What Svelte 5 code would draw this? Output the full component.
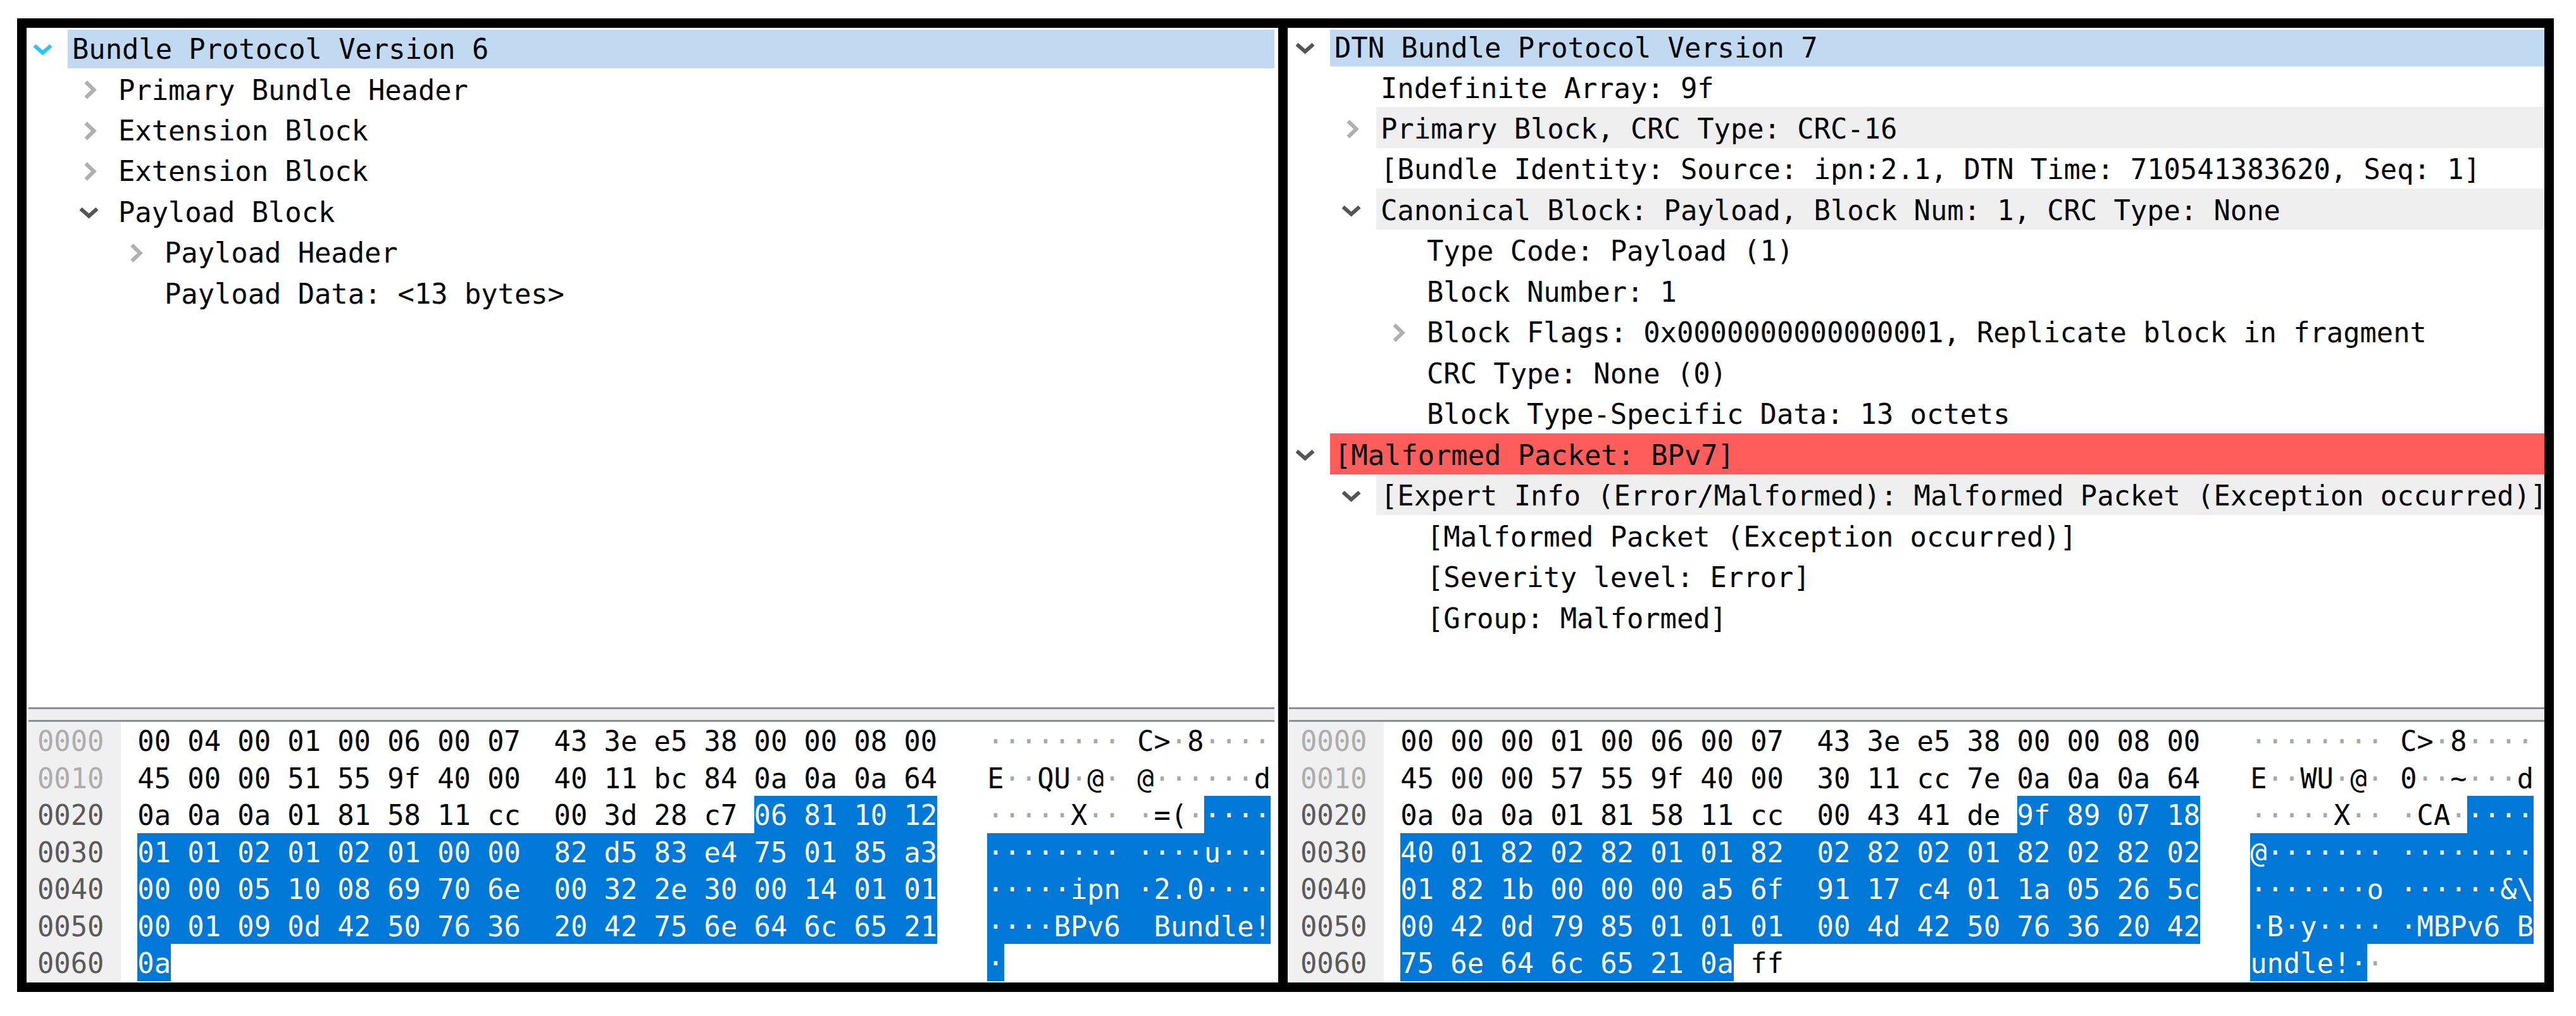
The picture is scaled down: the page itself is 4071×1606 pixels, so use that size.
<script>
  // one capture per pane: tree rows, raw bytes, first selected byte and end of selection
  const panes = [
    {
      name: 'v6',
      rows: [
        { level: 0, text: 'Bundle Protocol Version 6', icon: 'down', iconTone: 'accent', tone: 'selected' },
        { level: 1, text: 'Primary Bundle Header', icon: 'right' },
        { level: 1, text: 'Extension Block', icon: 'right' },
        { level: 1, text: 'Extension Block', icon: 'right' },
        { level: 1, text: 'Payload Block', icon: 'down' },
        { level: 2, text: 'Payload Header', icon: 'right' },
        { level: 2, text: 'Payload Data: <13 bytes>' }
      ],
      dump:
        '00 04 00 01 00 06 00 07 43 3e e5 38 00 00 08 00 ' +
        '45 00 00 51 55 9f 40 00 40 11 bc 84 0a 0a 0a 64 ' +
        '0a 0a 0a 01 81 58 11 cc 00 3d 28 c7 06 81 10 12 ' +
        '01 01 02 01 02 01 00 00 82 d5 83 e4 75 01 85 a3 ' +
        '00 00 05 10 08 69 70 6e 00 32 2e 30 00 14 01 01 ' +
        '00 01 09 0d 42 50 76 36 20 42 75 6e 64 6c 65 21 ' +
        '0a',
      selStart: 0x2c,
      selEnd: 0x61
    },
    {
      name: 'v7',
      rows: [
        { level: 0, text: 'DTN Bundle Protocol Version 7', icon: 'down', tone: 'selected' },
        { level: 1, text: 'Indefinite Array: 9f' },
        { level: 1, text: 'Primary Block, CRC Type: CRC-16', icon: 'right', tone: 'band' },
        { level: 1, text: '[Bundle Identity: Source: ipn:2.1, DTN Time: 710541383620, Seq: 1]' },
        { level: 1, text: 'Canonical Block: Payload, Block Num: 1, CRC Type: None', icon: 'down', tone: 'band' },
        { level: 2, text: 'Type Code: Payload (1)' },
        { level: 2, text: 'Block Number: 1' },
        { level: 2, text: 'Block Flags: 0x0000000000000001, Replicate block in fragment', icon: 'right' },
        { level: 2, text: 'CRC Type: None (0)' },
        { level: 2, text: 'Block Type-Specific Data: 13 octets' },
        { level: 0, text: '[Malformed Packet: BPv7]', icon: 'down', tone: 'error' },
        { level: 1, text: '[Expert Info (Error/Malformed): Malformed Packet (Exception occurred)]', icon: 'down', tone: 'band' },
        { level: 2, text: '[Malformed Packet (Exception occurred)]' },
        { level: 2, text: '[Severity level: Error]' },
        { level: 2, text: '[Group: Malformed]' }
      ],
      dump:
        '00 00 00 01 00 06 00 07 43 3e e5 38 00 00 08 00 ' +
        '45 00 00 57 55 9f 40 00 30 11 cc 7e 0a 0a 0a 64 ' +
        '0a 0a 0a 01 81 58 11 cc 00 43 41 de 9f 89 07 18 ' +
        '40 01 82 02 82 01 01 82 02 82 02 01 82 02 82 02 ' +
        '01 82 1b 00 00 00 a5 6f 91 17 c4 01 1a 05 26 5c ' +
        '00 42 0d 79 85 01 01 01 00 4d 42 50 76 36 20 42 ' +
        '75 6e 64 6c 65 21 0a ff',
      selStart: 0x2c,
      selEnd: 0x67
    }
  ];

  function hexText(bytes) {
    return bytes.slice(0, 8).join(' ') + (bytes.length > 8 ? '  ' + bytes.slice(8).join(' ') : '');
  }

  function toChar(b) {
    const n = parseInt(b, 16);
    return n >= 0x20 && n < 0x7f ? String.fromCharCode(n) : '·';
  }

  function dumpRows(pane) {
    const all = pane.dump.split(' ');
    const out = [];
    for (let o = 0; o < all.length; o += 16) {
      const bytes = all.slice(o, o + 16);
      const from = Math.max(pane.selStart - o, 0);
      const to = Math.max(Math.min(pane.selEnd - o, bytes.length), from);
      const chars = [];
      bytes.forEach((b, i) => {
        if (i === 8) chars.push({ c: ' ', sel: from <= 8 && to > 8 });
        const c = toChar(b);
        chars.push({ c, dot: c === '·', sel: i >= from && i < to });
      });
      // the selection can start in the second group, so the first part keeps its real columns
      const head = from > 8
        ? bytes.slice(0, 8).join(' ') + '  ' + bytes.slice(8, from).join(' ') + ' '
        : from > 0
          ? bytes.slice(0, from).join(' ') + ' '
          : '';
      out.push({
        offset: o.toString(16).padStart(4, '0'),
        before: to > from ? head : hexText(bytes),
        selected: from === 0 ? hexText(bytes.slice(0, to)) : bytes.slice(from, to).join(' '),
        after: to > from && to < bytes.length ? ' ' + bytes.slice(to).join(' ') : '',
        chars,
        faded: o < 0x20
      });
    }
    return out;
  }
</script>

<div class="frame">
  {#each panes as pane, p}
    {#if p > 0}<div class="divider"></div>{/if}
    <section class="pane {pane.name}">
      <div class="tree">
        {#each pane.rows as row}
          <div class="row" style="--level: {row.level}">
            <span class="twisty">
              {#if row.icon === 'down'}
                <svg class="chev {row.iconTone || 'dark'}" viewBox="0 0 33 20" width="33" height="20"><path d="M3.5 4 L16.5 15.5 L29.5 4" /></svg>
              {:else if row.icon === 'right'}
                <svg class="chev light" viewBox="0 0 33 32" width="33" height="32"><path d="M11.5 3.5 L24.5 16 L11.5 28.5" /></svg>
              {/if}
            </span>
            <span class="label {row.tone || ''}">{row.text}</span>
          </div>
        {/each}
      </div>

      <div class="hexbar"></div>

      <div class="dump">
        {#each dumpRows(pane) as line}
          <div class="line">
            <span class="offset" class:faded={line.faded}>{line.offset}</span>
            <span class="hex">{line.before}{#if line.selected}<span class="sel">{line.selected}</span>{/if}{line.after}</span>
            <span class="ascii">{#each line.chars as ch}<span class:dot={ch.dot} class:sel={ch.sel}>{ch.c}</span>{/each}</span>
          </div>
        {/each}
      </div>
    </section>
  {/each}
</div>

<style>
  :global(body) {
    margin: 0;
    background: #fff;
  }

  .frame {
    display: flex;
    box-sizing: border-box;
    width: 4009px;
    height: 1539px;
    margin: 29px 0 0 27px;
    border: 15px solid #000;
    font-family: "DejaVu Sans Mono", monospace;
    font-size: 43.74px;
    color: #000;
  }

  .divider {
    position: relative;
    flex: none;
    width: 15px;
    background: #000;
  }

  /* little overshoot below the frame where the two captures were pasted */
  .divider::after {
    content: "";
    position: absolute;
    left: 3px;
    right: 4px;
    top: 100%;
    height: 18px;
    background: #000;
  }

  .pane {
    display: flex;
    flex-direction: column;
    flex: none;
    overflow: hidden;
  }

  .v6 {
    width: 1978px;
    --gutter: 65px;
    --first-row: 61px;
    --bar-left: 3px;
    --bar-right: 6px;
    --offset-left: 3px;
    --offset-col: 146px;
    --offset-pad: 14px;
  }

  .v7 {
    width: 1986px;
    --gutter: 67px;
    --first-row: 58px;
    --bar-left: 2px;
    --bar-right: 0px;
    --offset-left: 0px;
    --offset-col: 152px;
    --offset-pad: 20px;
  }

  .tree {
    flex: none;
    height: 1071px;
    padding-top: 3px;
    overflow: hidden;
  }

  .row {
    display: flex;
    height: 64.47px;
    padding-left: calc(var(--level) * 73px);
    line-height: 64.47px;
    box-sizing: border-box;
  }

  .row:first-child {
    height: var(--first-row);
    line-height: var(--first-row);
  }

  .twisty {
    display: flex;
    flex: none;
    align-items: center;
    justify-content: flex-end;
    box-sizing: border-box;
    width: var(--gutter);
    padding-top: 4px;
    padding-right: 23px;
  }

  .row:first-child .twisty {
    padding-top: 0;
  }

  .chev {
    display: block;
    fill: none;
    stroke-width: 6;
  }

  .chev.dark {
    stroke: #555;
  }

  .chev.accent {
    stroke: #2dc4f8;
  }

  .chev.light {
    stroke: #b0b0b0;
  }

  .label {
    flex: 1;
    min-width: 0;
    padding-top: 2.5px;
    padding-left: 7px;
    white-space: pre;
    overflow: hidden;
  }

  .row:first-child .label {
    padding-top: 0;
  }

  .v6 .label.selected {
    margin-right: 6px;
  }

  .label.selected {
    background: #c1daf2;
  }

  .label.band {
    background: #efefef;
  }

  .label.error {
    background: #ff5c5c;
  }

  .hexbar {
    flex: none;
    height: 17px;
    margin: 0 var(--bar-right) 0 var(--bar-left);
    border-top: 3px solid #8b8d97;
    border-bottom: 3px solid #8b8d97;
    background: #efefef;
  }

  .dump {
    flex: 1;
    border-bottom: 1px solid #777;
  }

  .line {
    display: flex;
    height: 58.5px;
    line-height: 62.5px;
    white-space: pre;
  }

  .line:last-child {
    height: 61px;
  }

  .offset {
    flex: none;
    box-sizing: border-box;
    width: var(--offset-col);
    margin-left: var(--offset-left);
    padding-left: var(--offset-pad);
    background: #f0f0f0;
    color: #5a5a5a;
  }

  .offset.faded {
    color: #adadad;
  }

  .hex {
    flex: none;
    width: 48ch;
    margin-left: 1ch;
  }

  .ascii {
    flex: none;
    width: 17ch;
    margin-left: 3ch;
  }

  .sel {
    display: inline-block;
    height: 58.5px;
    background: #0078d7;
    color: #fff;
    vertical-align: top;
  }

  .dot {
    color: #a8a8a8;
  }

  .dot.sel {
    color: #fff;
  }
</style>
